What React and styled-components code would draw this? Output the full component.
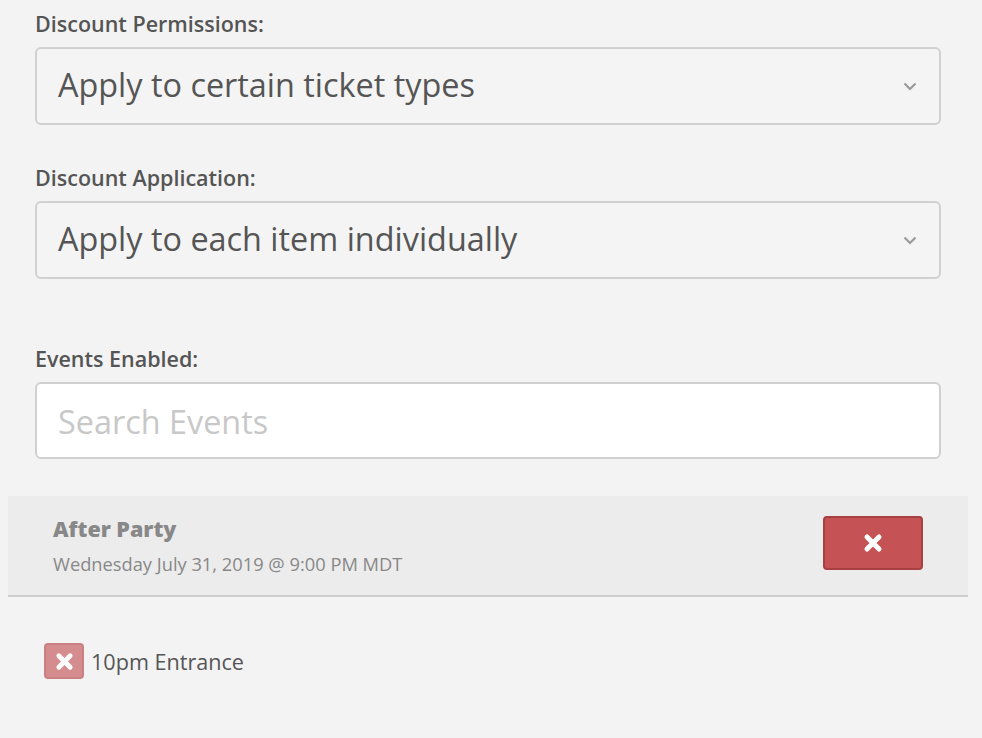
import React from "react";
import styled, { createGlobalStyle } from "styled-components";

const Global = createGlobalStyle`
  html, body { margin: 0; padding: 0; background: #f3f3f3; }
  body { font-family: "Open Sans", "Noto Sans", sans-serif; }
`;

const Page = styled.div`
  min-height: 738px;
  background: #f3f3f3;
  padding: 10px 41px 0 35px;
  box-sizing: border-box;
`;

const Field = styled.div`
  display: flex;
  flex-direction: column;
  margin-bottom: ${(p) => p.$gap || 0}px;
`;

const Label = styled.div`
  font-size: 21.5px;
  line-height: 28px;
  font-weight: 600;
  color: #555;
  margin-bottom: 9px;
`;

const Select = styled.div`
  height: 78px;
  box-sizing: border-box;
  border: 2px solid #d0d0d0;
  border-radius: 6px;
  background: #f4f4f4;
  display: flex;
  align-items: center;
  justify-content: space-between;
  padding: 0 22px 0 21px;
  font-size: 32.4px;
  color: #555;
`;

const SelectText = styled.span`
  margin-top: -4px;
`;

const Input = styled.div`
  height: 77px;
  box-sizing: border-box;
  border: 2px solid #d0d0d0;
  border-radius: 6px;
  background: #fff;
  display: flex;
  align-items: center;
  padding: 0 21px;
  font-size: 32.4px;
  color: #c8c8c8;
`;

const EventRow = styled.div`
  margin: 37px -27px 0 -27px;
  height: 101px;
  box-sizing: border-box;
  background: #ececec;
  border-bottom: 2px solid #cdcdcd;
  display: flex;
  align-items: center;
  justify-content: space-between;
  padding: 0 45px 0 45px;
`;

const EventInfo = styled.div`
  display: flex;
  flex-direction: column;
  gap: 9px;
`;

const EventTitle = styled.div`
  font-size: 21.5px;
  font-weight: 800;
  color: #888;
  line-height: 28px;
`;

const EventDate = styled.div`
  font-size: 18.3px;
  color: #888;
  line-height: 24px;
`;

const RemoveButton = styled.button`
  width: ${(p) => (p.$small ? 40 : 100)}px;
  height: ${(p) => (p.$small ? 36 : 54)}px;
  box-sizing: border-box;
  border: 2px solid ${(p) => (p.$small ? "#c98082" : "#a83f41")};
  border-radius: 4px;
  background: ${(p) => (p.$small ? "#d58c8e" : "#c55254")};
  color: #fff;
  display: flex;
  align-items: center;
  justify-content: center;
  padding: 0;
  cursor: pointer;
  margin-top: ${(p) => (p.$small ? 0 : -6)}px;
`;

const TicketRow = styled.div`
  display: flex;
  align-items: center;
  gap: 7px;
  margin: 46px 0 0 9px;
`;

const TicketName = styled.div`
  font-size: 21.6px;
  color: #555;
`;

const Chevron = () => (
  <svg width="14" height="9" viewBox="0 0 14 9">
    <path d="M1.5 1.5 L7 7 L12.5 1.5" fill="none" stroke="#9a9a9a" strokeWidth="2.2" />
  </svg>
);

const TimesIcon = ({ size = 19 }) => (
  <svg width={size} height={size} viewBox="0 0 20 20">
    <path
      d="M4 4 L16 16 M16 4 L4 16"
      fill="none"
      stroke="#fff"
      strokeWidth="5"
      strokeLinecap="round"
    />
  </svg>
);

export default function App() {
  return (
    <>
      <Global />
      <Page>
        <Field $gap={39}>
          <Label>Discount Permissions:</Label>
          <Select>
            <SelectText>Apply to certain ticket types</SelectText>
            <Chevron />
          </Select>
        </Field>
        <Field $gap={66}>
          <Label>Discount Application:</Label>
          <Select>
            <SelectText>Apply to each item individually</SelectText>
            <Chevron />
          </Select>
        </Field>
        <Field>
          <Label>Events Enabled:</Label>
          <Input>Search Events</Input>
        </Field>
        <EventRow>
          <EventInfo>
            <EventTitle>After Party</EventTitle>
            <EventDate>Wednesday July 31, 2019 @ 9:00 PM MDT</EventDate>
          </EventInfo>
          <RemoveButton>
            <TimesIcon size={20} />
          </RemoveButton>
        </EventRow>
        <TicketRow>
          <RemoveButton $small>
            <TimesIcon size={19} />
          </RemoveButton>
          <TicketName>10pm Entrance</TicketName>
        </TicketRow>
      </Page>
    </>
  );
}
